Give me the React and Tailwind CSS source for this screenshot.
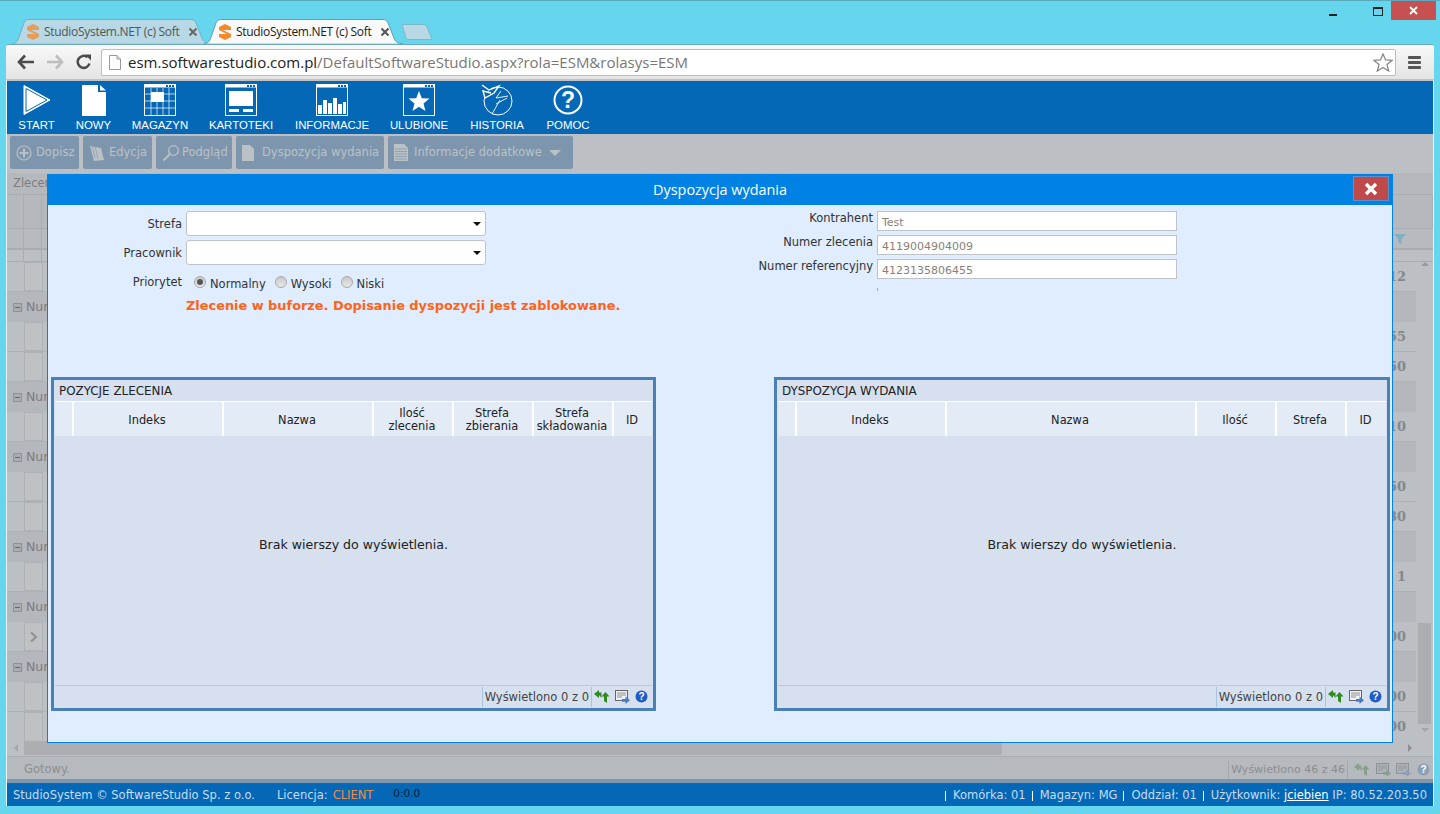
const gridRows = [
  { t: 'r', v: '12' },
  { t: 'g', l: 'Nur' },
  { t: 'r', v: '55' },
  { t: 'r', v: '50' },
  { t: 'g', l: 'Nur' },
  { t: 'r', v: '10' },
  { t: 'g', l: 'Nur' },
  { t: 'r', v: '50' },
  { t: 'r', v: '30' },
  { t: 'g', l: 'Nur' },
  { t: 'r', v: '1' },
  { t: 'g', l: 'Nur' },
  { t: 'r', v: '00', c: true },
  { t: 'g', l: 'Nur' },
  { t: 'r', v: '00' },
  { t: 'r', v: '00' },
];

function TabShape({ fill, stroke }) {
  return (
    <svg className="absolute inset-0 w-full h-full" viewBox="0 0 200 26" preserveAspectRatio="none">
      <path d="M0 25.5 C5 25.5 6 22 8 16 L12 4 C13 1 15 0.5 18 0.5 L178 0.5 C181 0.5 183 1 184 4 L190 20 C191.5 24 194 25.5 199 25.5" fill={fill} stroke={stroke} strokeWidth="1" vectorEffect="non-scaling-stroke" />
    </svg>
  );
}

function Favicon({ o = 1 }) {
  return (
    <svg width="14" height="16" viewBox="0 0 14 16" style={{ opacity: o }} className="shrink-0">
      <path d="M7 0 L13 3 L13 6 L5 6 L13 10 L13 13 L7 16 L1 13 L1 10 L9 10 L1 6 L1 3 Z" fill="#f58a2c" />
    </svg>
  );
}

function Tab({ active, className }) {
  return (
    <div className={`relative h-[25px] flex items-center ${className}`}>
      <TabShape fill={active ? '#f9f9f9' : '#b7d8e4'} stroke={active ? '#5f9fb2' : '#6fb0c4'} />
      <div className="relative flex items-center pl-[14px] w-full">
        <Favicon o={active ? 1 : 0.75} />
        <span className={`ml-[4px] w-[140px] whitespace-nowrap text-[12px] tracking-[-0.3px] font-['Open_Sans',sans-serif] ${active ? 'text-[#222]' : 'text-[#555]'}`}>StudioSystem.NET (c) Soft</span>
        <svg width="10" height="10" viewBox="0 0 10 10" className="ml-[4px]"><path d="M1.5 1.5 L8.5 8.5 M8.5 1.5 L1.5 8.5" stroke={active ? '#555' : '#666'} strokeWidth="2" /></svg>
      </div>
    </div>
  );
}

function NavIcon({ kind }) {
  const win = (inner) => (
    <svg width="32" height="32" viewBox="0 0 32 32" className="block">
      <rect x="0.5" y="0.5" width="31" height="31" fill="none" stroke="#fff" />
      <rect x="0.5" y="0.5" width="31" height="3" fill="#fff" />
      <rect x="22" y="1" width="2" height="2" fill="#0468b7" /><rect x="25" y="1" width="2" height="2" fill="#0468b7" /><rect x="28" y="1" width="2" height="2" fill="#0468b7" />
      {inner}
    </svg>
  );
  if (kind === 'start') return (
    <svg width="30" height="32" viewBox="0 0 30 32" className="block"><path d="M2 1.5 L28 16 L2 30.5 Z" fill="#fff" stroke="#fff" strokeWidth="1" strokeLinejoin="round" /><path d="M4 4.5 L25 16 L4 27.5 Z" fill="none" stroke="#0468b7" strokeWidth="1" /></svg>
  );
  if (kind === 'nowy') return (
    <svg width="24" height="31" viewBox="0 0 24 31" className="block"><path d="M0 0 H16 V7 H24 V31 H0 Z" fill="#fff" /><path d="M18 0 L24 5.5 H18 Z" fill="#fff" /></svg>
  );
  if (kind === 'magazyn') return win(
    <g>
      <path d="M0 10H32M0 17H32M0 24H32M7 4V31M13 4V31M19 4V31M25 4V31" stroke="#fff" strokeWidth="0.7" />
      <rect x="7" y="8" width="13" height="10" fill="#fff" />
    </g>
  );
  if (kind === 'kartoteki') return win(
    <g><rect x="4" y="7" width="24" height="15" fill="#fff" /><rect x="4" y="25" width="10" height="3" fill="#fff" /><rect x="18" y="25" width="10" height="3" fill="#fff" /></g>
  );
  if (kind === 'informacje') return win(
    <g fill="#fff"><rect x="2" y="21" width="4" height="9" /><rect x="7" y="16" width="4" height="14" /><rect x="12" y="19" width="4" height="11" /><rect x="17" y="14" width="4" height="16" /><rect x="22" y="20" width="4" height="10" /><rect x="27" y="18" width="3" height="12" /></g>
  );
  if (kind === 'ulubione') return win(
    <path d="M16 7 L18.8 14.2 L26.5 14.6 L20.5 19.4 L22.5 27 L16 22.8 L9.5 27 L11.5 19.4 L5.5 14.6 L13.2 14.2 Z" fill="#fff" />
  );
  if (kind === 'historia') return (
    <svg width="32" height="34" viewBox="0 0 32 34" className="block" fill="none" stroke="#fff" strokeWidth="1">
      <ellipse cx="17" cy="18" rx="14" ry="14" />
      <path d="M1 2 L8 7 L18 3 L13 10 L4 15 L2 8 L10 10" strokeWidth="1.4" fill="#0468b7" />
      <path d="M20 8 L15 15 L27 13 M15 21 L26 15 M19 17 L11 31" strokeWidth="0.9" />
    </svg>
  );
  return (
    <svg width="30" height="30" viewBox="0 0 30 30" className="block">
      <circle cx="15" cy="15" r="13.5" fill="none" stroke="#fff" strokeWidth="2" />
      <text x="15" y="23" textAnchor="middle" fontSize="23" fontWeight="700" fill="#fff" fontFamily="Liberation Sans, sans-serif">?</text>
    </svg>
  );
}

const navItems = [
  ['start', 'START', 'w-[57px]'],
  ['nowy', 'NOWY', 'w-[57px]'],
  ['magazyn', 'MAGAZYN', 'w-[76px]'],
  ['kartoteki', 'KARTOTEKI', 'w-[86px]'],
  ['informacje', 'INFORMACJE', 'w-[96px]'],
  ['ulubione', 'ULUBIONE', 'w-[78px]'],
  ['historia', 'HISTORIA', 'w-[78px]'],
  ['pomoc', 'POMOC', 'w-[64px]'],
];

function BtnIcon({ kind }) {
  const c = '#bcc1c6';
  if (kind === 'plus') return <svg width="16" height="16" viewBox="0 0 16 16"><circle cx="8" cy="8" r="7" fill="none" stroke={c} strokeWidth="1.2" /><path d="M8 3.5V12.5M3.5 8H12.5" stroke={c} strokeWidth="2" /></svg>;
  if (kind === 'edit') return <svg width="16" height="18" viewBox="0 0 16 18"><path d="M1 2 L12 4 L15 16 L5 17 Z" fill={c} /><path d="M3 1 L6 14M6 2 L9 15" stroke="#7d96ad" strokeWidth="0.6" /></svg>;
  if (kind === 'zoom') return <svg width="18" height="18" viewBox="0 0 18 18" fill="none" stroke={c}><circle cx="11.5" cy="6.5" r="4.8" strokeWidth="1.3" /><path d="M8 10 L1.5 16.5" strokeWidth="2" /></svg>;
  if (kind === 'doc') return <svg width="12" height="16" viewBox="0 0 12 16"><path d="M0 0H8L12 4V16H0Z" fill={c} /></svg>;
  return <svg width="14" height="17" viewBox="0 0 14 17"><path d="M0 0H10L14 4V17H0Z" fill={c} /><path d="M1 5H13M1 7.5H13M1 10H13M1 12.5H13M1 15H13" stroke="#7d96ad" strokeWidth="0.7" /></svg>;
}

function ToolBtn({ w, icon, label, gap, caret }) {
  return (
    <div className={`h-[33px] rounded-[2px] bg-[#7d96ad] flex items-center pl-[6px] ${w}`}>
      <BtnIcon kind={icon} />
      <span className={`${gap} text-[#bcc1c6] text-[11.5px] whitespace-nowrap`}>{label}</span>
      {caret && <span className="ml-[7px] w-0 h-0 border-x-[6px] border-x-transparent border-t-[6px] border-t-[#bcc1c6]" />}
    </div>
  );
}

function Refresh({ dim }) {
  const c = dim ? '#87a08d' : '#2f8a22';
  return (
    <svg width="16" height="14" viewBox="0 0 16 14" className="block">
      <path d="M0 4 L5 0 V2.5 H7.5 V8 L5.5 5.5 H5 V8 Z" fill={c} />
      <path d="M7.5 6.5 L11.5 2 L15.5 6.5 H13 V13 L10 11 V6.5 Z" fill={c} />
    </svg>
  );
}

function Export({ dim, arrow = '#4a7cc0' }) {
  return (
    <svg width="15" height="14" viewBox="0 0 15 14" className="block">
      <rect x="0.5" y="0.5" width="12" height="10" fill={dim ? '#aeb3b7' : '#eef2f6'} stroke={dim ? '#8d9296' : '#666'} />
      <path d="M2 3H11M2 5H11M2 7H7" stroke={dim ? '#8d9296' : '#777'} strokeWidth="0.8" />
      <path d="M7 9H10.5V6.5L15 10.2L10.5 14V11.8H7Z" fill={arrow} />
    </svg>
  );
}

function Help({ dim }) {
  return (
    <svg width="13" height="13" viewBox="0 0 13 13" className="block">
      <circle cx="6.5" cy="6.5" r="6" fill={dim ? '#8b9fb6' : '#1e5cc8'} />
      <text x="6.5" y="10.2" textAnchor="middle" fontSize="10" fontWeight="700" fill="#fff" fontFamily="Liberation Sans, sans-serif">?</text>
    </svg>
  );
}

function Panel({ title, cols, className }) {
  return (
    <div className={`h-[334px] border-[3px] border-[#4a81b4] flex flex-col bg-[#d6e0ee] p-px ${className}`}>
      <div className="h-[21px] flex items-center pl-[4px] pt-[1px] text-[11.9px] text-[#222] border-b border-white">{title}</div>
      <div className="h-[34px] flex bg-[#e3ebf6]">
        {cols.map((c, i) => (
          <div key={i} className={`${c.w} h-full border-r-2 border-white last:border-r-0 flex items-center justify-center text-center text-[11.4px] leading-[13px] text-[#222] whitespace-pre-line pr-[2px] pt-[2px]`}>{c.t}</div>
        ))}
      </div>
      <div className="flex-1 flex items-center justify-center pb-[30px] text-[12.6px] text-[#222] border-b border-[#b3cce6]">Brak wierszy do wyświetlenia.</div>
      <div className="h-[21px] flex items-center justify-end pr-[4px] text-[11.5px] text-[#444]">
        <span className="border-x border-[#a9c2dd] h-[20px] flex items-center pt-[2px] pl-[2px] pr-[2px] whitespace-nowrap">Wyświetlono 0 z 0</span>
        <span className="ml-[2px]"><Refresh /></span>
        <span className="ml-[5px]"><Export /></span>
        <span className="ml-[5px]"><Help /></span>
      </div>
    </div>
  );
}

function Select() {
  return (
    <div className="w-[300px] h-[25px] bg-white border border-[#bfc4ca] rounded-[3px] flex items-center justify-end pr-[4px]">
      <span className="w-0 h-0 border-x-[4px] border-x-transparent border-t-[4px] border-t-[#111]" />
    </div>
  );
}

function Radio({ on }) {
  return (
    <span className="w-[12px] h-[12px] rounded-full bg-gradient-to-b from-[#c9c9c9] to-[#e9e9e9] border border-[#a8a8a8] flex items-center justify-center">
      {on && <span className="w-[6px] h-[6px] rounded-full bg-[#555]" />}
    </span>
  );
}

function RoText({ label, value }) {
  return (
    <div className="flex h-[20px]">
      <span className="w-[130px] text-right text-[11.5px] text-[#333] leading-[15px] whitespace-nowrap">{label}</span>
      <span className="ml-[4px] w-[300px] h-[20px] bg-white border border-[#bfc4ca] pl-[4px] text-[11px] text-[#8a8078] leading-[21px]">{value}</span>
    </div>
  );
}

const FootSep = () => <span className="w-px h-[10px] bg-white ml-[6px] mr-[7px] inline-block" />;

function Cells() {
  return (
    <>
      <span className="w-[17px] border-r border-[#a9acb0]" />
      <span className="w-[18px] border-r border-[#a9acb0]" />
    </>
  );
}

export default function App() {
  return (
    <div className="relative w-[1440px] h-[814px] overflow-hidden bg-[#66d6ef] flex flex-col font-['DejaVu_Sans',sans-serif] border-t border-[#5aa9be]">
      {/* Window controls */}
      <div className="h-[19px] flex justify-end pr-[4px] shrink-0">
        <div className="flex items-end h-[14px] mt-[1px] mr-[36px]"><span className="w-[8px] h-[2px] bg-[#222]" /></div>
        <div className="w-[10px] h-[9px] mt-[6px] mr-[8px] border border-[#222] border-t-2" />
        <div className="w-[45px] h-[19px] bg-[#c75050] flex items-center justify-center">
          <svg width="9" height="9" viewBox="0 0 9 9"><path d="M1 1L8 8M8 1L1 8" stroke="#fff" strokeWidth="1.8" /></svg>
        </div>
      </div>
      {/* Tabs */}
      <div className="h-[24px] flex items-end pl-[12px] shrink-0 relative z-10">
        <Tab className="w-[200px]" />
        <Tab active className="w-[200px] -ml-[8px]" />
        <svg width="32" height="16" viewBox="0 0 32 16" className="-ml-[3px] mb-[4px]"><path d="M1 0.5 H22 C24 0.5 25 1.5 26 3 L31 15.5 H8 C6 15.5 5 14.5 4.5 13 Z" fill="#b7d8e4" stroke="#7cb6c9" /></svg>
      </div>
      {/* Toolbar */}
      <div className="mx-[6px] h-[35px] shrink-0 rounded-t-[2px] bg-gradient-to-b from-[#f9f9f9] to-[#e4e4e4] border-t border-[#6aa8bb] flex items-center">
        <svg width="18" height="16" viewBox="0 0 18 16" className="ml-[11px]"><path d="M8 1.5 L2 8 L8 14.5 M2.5 8 H17" fill="none" stroke="#4b4b4b" strokeWidth="2.6" /></svg>
        <svg width="18" height="16" viewBox="0 0 18 16" className="ml-[11px]"><path d="M10 1.5 L16 8 L10 14.5 M15.5 8 H1" fill="none" stroke="#bdbdbd" strokeWidth="2.6" /></svg>
        <svg width="16" height="16" viewBox="0 0 16 16" className="ml-[12px]"><path d="M13.5 9.5 A6 6 0 1 1 11.5 3.2" fill="none" stroke="#4b4b4b" strokeWidth="2.5" /><path d="M9 0.5 L15 0.5 L15 6.5 Z" fill="#4b4b4b" /></svg>
        <div className="ml-[9px] w-[1295px] h-[27px] bg-white border border-[#bdbdbd] rounded-[2px] flex items-center pl-[7px]">
          <svg width="12" height="15" viewBox="0 0 12 15" className="shrink-0"><path d="M0.5 0.5H8L11.5 4V14.5H0.5Z" fill="#fdfdfd" stroke="#999" /><path d="M8 0.5V4H11.5" fill="#ddd" stroke="#999" /></svg>
          <span className="ml-[7px] text-[15px] font-['Open_Sans',sans-serif] whitespace-nowrap text-[#222]">esm.softwarestudio.com.pl<span className="text-[#777]">/DefaultSoftwareStudio.aspx?rola=ESM&amp;rolasys=ESM</span></span>
          <svg width="20" height="19" viewBox="0 0 20 19" className="ml-auto mr-[2px]"><path d="M10 1 L12.6 7 L19 7.4 L14 11.6 L15.7 18 L10 14.5 L4.3 18 L6 11.6 L1 7.4 L7.4 7 Z" fill="#fff" stroke="#888" strokeWidth="1.3" /></svg>
        </div>
        <div className="ml-[12px] w-[13px] flex flex-col gap-[2px]">
          <span className="h-[3px] bg-[#555] rounded-[1px]" /><span className="h-[3px] bg-[#555] rounded-[1px]" /><span className="h-[3px] bg-[#555] rounded-[1px]" />
        </div>
      </div>

      {/* App */}
      <div className="relative mx-[6px] flex-1 border-l border-[#e8f4f8] border-r border-t-2 border-t-[#c2c2c2] flex flex-col min-h-0 bg-[#b9bcc0]">
        {/* Top nav */}
        <div className="h-[53px] shrink-0 bg-[#0468b7] flex pl-[1px]">
          {navItems.map(([k, l, w]) => (
            <div key={k} className={`${w} flex flex-col items-center justify-end`}>
              <div className="h-[34px] flex items-center"><NavIcon kind={k} /></div>
              <div className="mt-[2px] mb-[2px] text-white text-[11.4px] leading-[13px] font-['Liberation_Sans',sans-serif] whitespace-nowrap">{l}</div>
            </div>
          ))}
        </div>
        {/* Disabled toolbar */}
        <div className="h-[39px] shrink-0 flex items-start gap-[4px] pt-[2px] pl-[3px] bg-[#bcbfc3]">
          <ToolBtn w="w-[69px]" icon="plus" label="Dopisz" gap="ml-[4px]" />
          <ToolBtn w="w-[69px]" icon="edit" label="Edycja" gap="ml-[4px]" />
          <ToolBtn w="w-[76px]" icon="zoom" label="Podgląd" gap="ml-[2px]" />
          <ToolBtn w="w-[148px]" icon="doc" label="Dyspozycja wydania" gap="ml-[8px]" />
          <ToolBtn w="w-[185px]" icon="list" label="Informacje dodatkowe" gap="ml-[6px]" caret />
        </div>
        {/* Background grid */}
        <div className="flex-1 min-h-0 flex flex-col bg-[#bcbfc3]">
          <div className="h-[21px] shrink-0 pl-[6px] text-[11.5px] leading-[20px] text-[#7d7d7d] bg-[#b5b8bc]">Zlecenia</div>
          <div className="h-[35px] shrink-0 flex bg-[#b5b8bc] border-y border-[#a9acb0]">
            <Cells />
            <div className="ml-auto w-[48px] border-x border-[#a9acb0]" />
          </div>
          <div className="h-[21px] shrink-0 flex bg-[#b7babe] border-b-2 border-[#a9acb0]">
            <Cells />
            <div className="ml-auto mr-[24px] flex items-center">
              <svg width="12" height="10" viewBox="0 0 12 10" className="mr-[3px]"><path d="M0 0H12L7.5 5V10L4.5 8.5V5Z" fill="#7fb0c0" /></svg>
            </div>
          </div>
          <div className="h-[12px] shrink-0 flex bg-[#bcbfc3] border-b border-[#a9acb0]">
            <Cells />
          </div>
          <div className="h-[478px] shrink-0 flex overflow-hidden">
            <div className="flex-1 min-w-0 flex flex-col">
              {gridRows.map((r, i) =>
                r.t === 'g' ? (
                  <div key={i} className="h-[30px] shrink-0 flex items-center pl-[6px] text-[#7f7a80] text-[12.5px] bg-[#b4b7bb]">
                    <span className="w-[9px] h-[9px] mr-[4px] border border-[#8f9295] bg-[#a9acb0] flex items-center justify-center"><span className="w-[5px] h-px bg-[#666]" /></span>
                    {r.l}
                  </div>
                ) : (
                  <div key={i} className="h-[30px] shrink-0 flex items-center pl-[17px] bg-[#bcbfc3] border-b border-[#aeb1b5]">
                    <span className="w-[19px] h-[29px] border border-[#aeb1b5] bg-[#bfc1c4] flex items-center justify-center text-[#8d9093] text-[11px]">
                      {r.c && <svg width="7" height="10" viewBox="0 0 7 10"><path d="M1 0.5L6 5L1 9.5" fill="none" stroke="#8d9093" strokeWidth="2" /></svg>}
                    </span>
                    <span className="ml-auto pr-[10px] font-['DejaVu_Serif',serif] font-bold text-[13px] text-[#85888b]">{r.v}</span>
                  </div>
                )
              )}
            </div>
            <div className="w-[17px] shrink-0 flex flex-col items-center bg-[#bcbfc3] pb-[8px]">
              <span className="w-0 h-0 border-x-[4px] border-x-transparent border-b-[4px] border-b-[#999]" />
              <span className="w-[13px] h-[101px] mt-auto bg-[#acaeb1]" />
              <span className="mt-[4px] w-0 h-0 border-x-[4px] border-x-transparent border-t-[4px] border-t-[#a3a5a8]" />
            </div>
          </div>
          <div className="h-[16px] shrink-0 flex items-center bg-[#bcbfc3]">
            <span className="w-[17px] flex justify-center"><span className="w-0 h-0 border-y-[4px] border-y-transparent border-r-[4px] border-r-[#a3a5a8]" /></span>
            <span className="w-[978px] h-[14px] bg-[#acaeb1]" />
            <span className="ml-auto mr-[21px] w-0 h-0 border-y-[4px] border-y-transparent border-l-[4px] border-l-[#8d9093]" />
          </div>
          <div className="h-[23px] shrink-0 border-t border-[#a9acb0] bg-[#b6b9bd] flex items-center pt-[3px] pl-[17px] pr-[3px] text-[11px] text-[#8c8f92]">
            <span className="text-[11.5px]">Gotowy.</span>
            <span className="ml-auto border-x border-[#a4a7aa] px-[2px] h-[18px] leading-[18px]">Wyświetlono 46 z 46</span>
            <span className="ml-[6px]"><Refresh dim /></span>
            <span className="ml-[6px]"><Export dim arrow="#87a08d" /></span>
            <span className="ml-[5px]"><Export dim arrow="#8b9fb6" /></span>
            <span className="ml-[6px]"><Help dim /></span>
          </div>
        </div>
        {/* Footer */}
        <div className="h-[27px] shrink-0 bg-[#0468b7] border-t-[4px] border-t-[#7e96ad] flex items-center pt-[2px] pl-[6px] pr-[6px] text-[11.5px] text-[#c6dcf0] whitespace-nowrap">
          <span>StudioSystem © SoftwareStudio Sp. z o.o.</span>
          <span className="ml-[22px]">Licencja:</span>
          <span className="ml-[5px] text-[#f08a3c]">CLIENT</span>
          <span className="ml-[20px] -mt-[3px] text-[#06203a] text-[10.5px]">0:0.0</span>
          <span className="ml-auto flex items-center">
            <FootSep />Komórka: 01<FootSep />Magazyn: MG<FootSep />Oddział: 01<FootSep />Użytkownik:&nbsp;
            <span className="text-white underline">jciebien</span>&nbsp;IP: 80.52.203.50
          </span>
        </div>

        {/* Modal dialog */}
        <div className="absolute left-[40px] top-[93px] w-[1346px] h-[569px] bg-[#dfedff] border border-[#0082e5] flex flex-col">
          <div className="h-[30px] shrink-0 bg-[#0082e5] relative flex items-center justify-center text-white text-[14.4px] font-['Open_Sans',sans-serif]">
            Dyspozycja wydania
            <div className="absolute right-[3px] top-[1px] w-[36px] h-[25px] bg-[#c04a4a] border border-[#5b8fd0] flex items-center justify-center">
              <svg width="14" height="14" viewBox="0 0 14 14"><path d="M2 2L12 12M12 2L2 12" stroke="#fff" strokeWidth="3.4" /></svg>
            </div>
          </div>
          <div className="h-[172px] shrink-0 flex pt-[6px]">
            <div className="w-[695px]">
              <div className="flex items-center h-[25px]">
                <span className="w-[134px] text-right text-[11.5px] text-[#333] pt-[2px]">Strefa</span>
                <div className="ml-[4px]"><Select /></div>
              </div>
              <div className="flex items-center h-[25px] mt-[4px]">
                <span className="w-[134px] text-right text-[11.5px] text-[#333] pt-[2px]">Pracownik</span>
                <div className="ml-[4px]"><Select /></div>
              </div>
              <div className="flex items-center h-[16px] mt-[11px] text-[11.5px] text-[#333]">
                <span className="w-[134px] text-right -mt-[2px]">Priorytet</span>
                <span className="ml-[12px] -mt-[5px]"><Radio on /></span><span className="ml-[4px] mt-[1px]">Normalny</span>
                <span className="ml-[9px] -mt-[5px]"><Radio /></span><span className="ml-[4px] mt-[1px]">Wysoki</span>
                <span className="ml-[9px] -mt-[5px]"><Radio /></span><span className="ml-[4px] mt-[1px]">Niski</span>
              </div>
              <div className="ml-[138px] mt-[4px] text-[#ff6319] font-bold text-[12.9px] whitespace-nowrap">Zlecenie w buforze. Dopisanie dyspozycji jest zablokowane.</div>
            </div>
            <div className="flex flex-col gap-[4px]">
              <RoText label="Kontrahent" value="Test" />
              <RoText label="Numer zlecenia" value="4119004904009" />
              <RoText label="Numer referencyjny" value="4123135806455" />
              <span className="ml-[134px] mt-[5px] w-px h-[3px] bg-[#aaa]" />
            </div>
          </div>
          <div className="flex pl-[3px]">
            <Panel
              title="POZYCJE ZLECENIA"
              className="w-[605px]"
              cols={[
                { w: 'w-[19px]', t: '' }, { w: 'w-[150px]', t: 'Indeks' }, { w: 'w-[150px]', t: 'Nazwa' },
                { w: 'w-[80px]', t: 'Ilość\nzlecenia' }, { w: 'w-[80px]', t: 'Strefa\nzbierania' }, { w: 'w-[80px]', t: 'Strefa\nskładowania' }, { w: 'flex-1', t: 'ID' },
              ]}
            />
            <Panel
              title="DYSPOZYCJA WYDANIA"
              className="w-[616px] ml-[118px]"
              cols={[
                { w: 'w-[19px]', t: '' }, { w: 'w-[150px]', t: 'Indeks' }, { w: 'w-[250px]', t: 'Nazwa' },
                { w: 'w-[80px]', t: 'Ilość' }, { w: 'w-[70px]', t: 'Strefa' }, { w: 'flex-1', t: 'ID' },
              ]}
            />
          </div>
        </div>
      </div>
      <div className="h-[8px] shrink-0 bg-[#66d6ef]" />
    </div>
  );
}
